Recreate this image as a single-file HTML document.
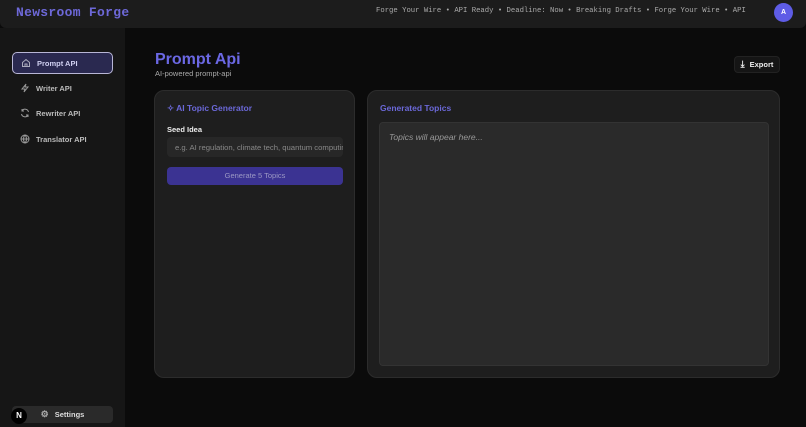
<!DOCTYPE html>
<html><head><style>
*{box-sizing:border-box;margin:0;padding:0}
body{width:806px;height:427px;background:#0b0b0b;font-family:"Liberation Sans",sans-serif;position:relative;overflow:hidden;color:#ddd}
.top{position:absolute;left:0;top:0;width:806px;height:28px;background:#1c1c1c;border-radius:0 0 6px 6px}
.logo{position:absolute;left:16px;top:5px;font-family:"Liberation Mono",monospace;font-weight:bold;font-size:13px;color:#6d68d8;letter-spacing:0.3px}
.ticker{position:absolute;left:376px;top:7px;font-family:"Liberation Mono",monospace;font-size:7.25px;color:#aaa;white-space:nowrap}
.av{position:absolute;left:774px;top:3px;width:19px;height:19px;border-radius:50%;background:#5e5ce6;color:#fff;font-size:7px;font-weight:bold;text-align:center;line-height:19px}
.side{position:absolute;left:0;top:28px;width:125px;height:399px;background:#161616}
.nav{position:absolute;left:12px;width:101px;height:22px;font-size:7.5px;color:#bbb;font-weight:bold;display:flex;align-items:center;padding-left:8px;gap:6px}
.nav.act{background:#2a2950;border:1.5px solid #b8b6d6;border-radius:5px;color:#cfcff0}
.nav svg{width:10px;height:10px}
.set{position:absolute;left:12px;top:406px;width:101px;height:17px;background:#2a2a2a;border-radius:4px;font-size:7.5px;font-weight:bold;color:#ddd;display:flex;align-items:center;justify-content:center;gap:6px}
.n{position:absolute;left:11px;top:408px;width:16px;height:16px;border-radius:50%;background:#000;color:#fff;font-size:8px;font-weight:bold;text-align:center;line-height:16px}
h1{position:absolute;left:155px;top:51px;font-size:16px;color:#6b68e4}
.sub{position:absolute;left:155px;top:69px;font-size:7.5px;color:#aaa}
.exp{position:absolute;left:734px;top:56px;width:46px;height:17px;background:#151515;border:1px solid #222;border-radius:4px;font-size:7.5px;font-weight:bold;color:#eee;display:flex;align-items:center;justify-content:center;gap:5px}
.card{position:absolute;background:#1e1e1e;border:1px solid #2c2c2c;border-radius:10px}
.ct{position:absolute;font-size:8.5px;font-weight:bold;color:#6b68d8}
</style></head><body>
<div class="top"><div class="logo">Newsroom Forge</div>
<div class="ticker">Forge Your Wire • API Ready • Deadline: Now • Breaking Drafts • Forge Your Wire • API</div>
<div class="av">A</div></div>
<div class="side">
<div class="nav act" style="top:24px"><svg viewBox="0 0 10 10" fill="none" stroke="#aab" stroke-width="1"><path d="M1.5 4.5L5 1.5 8.5 4.5V8.5H1.5Z M4 8.5V6h2v2.5"/></svg>Prompt API</div>
<div class="nav" style="top:49px"><svg viewBox="0 0 10 10" fill="none" stroke="#999" stroke-width="1"><path d="M6 1L2 6h3l-1 3 4-5H5z"/></svg>Writer API</div>
<div class="nav" style="top:74px"><svg viewBox="0 0 10 10" fill="none" stroke="#999" stroke-width="1"><path d="M8.5 4A3.5 3.5 0 0 0 2 3M1.5 6A3.5 3.5 0 0 0 8 7M2 1v2h2M8 9V7H6"/></svg>Rewriter API</div>
<div class="nav" style="top:100px"><svg viewBox="0 0 10 10" fill="none" stroke="#999" stroke-width="1"><circle cx="5" cy="5" r="4"/><path d="M1 5h8M5 1c-2 2-2 6 0 8M5 1c2 2 2 6 0 8"/></svg>Translator API</div>
</div>
<div class="set"><span style="color:#aaa;font-size:9px">⚙</span>Settings</div>
<div class="n">N</div>
<h1>Prompt Api</h1><div class="sub">AI-powered prompt-api</div>
<div class="exp"><span style="font-size:9px">⤓</span>Export</div>
<div class="card" style="left:154px;top:90px;width:201px;height:288px">
<div class="ct" style="left:12px;top:12px">✧ AI Topic Generator</div>
<div style="position:absolute;left:12px;top:34px;font-size:7.5px;font-weight:bold;color:#eee">Seed Idea</div>
<div style="position:absolute;left:12px;top:46px;width:176px;height:20px;background:#272727;border-radius:4px;font-size:7.7px;color:#888;padding:6px 8px;white-space:nowrap;overflow:hidden">e.g. AI regulation, climate tech, quantum computing</div>
<div style="position:absolute;left:12px;top:76px;width:176px;height:18px;background:#3b3392;border-radius:4px;font-size:7.5px;color:#9b98c4;text-align:center;line-height:18px">Generate 5 Topics</div>
</div>
<div class="card" style="left:367px;top:90px;width:413px;height:288px">
<div class="ct" style="left:12px;top:12px">Generated Topics</div>
<div style="position:absolute;left:11px;top:31px;width:390px;height:244px;background:#2a2a2a;border:1px solid #333;border-radius:4px;font-size:8.5px;font-style:italic;color:#999;padding:9px 9px">Topics will appear here...</div>
</div>
</body></html>
